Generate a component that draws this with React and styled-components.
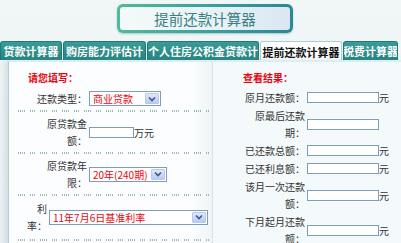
import styled, { createGlobalStyle } from "styled-components";

const GlobalStyle = createGlobalStyle`
  html, body {
    margin: 0;
    padding: 0;
  }
  body {
    background: #eef4f6;
    font-family: "Noto Sans CJK SC", "Liberation Sans", sans-serif;
    font-size: 10px;
    color: #333;
  }
`;

const TABS = ["贷款计算器", "购房能力评估计", "个人住房公积金贷款计", "提前还款计算器", "税费计算器"];
const TAB_WIDTHS = [62, 83, 112, 82, 55];

const RESULTS = ["原月还款额：", "原最后还款期：", "已还款总额：", "已还利息额：", "该月一次还款额：", "下月起月还款额："];

const Chevron = () => (
  <svg width="8" height="6" viewBox="0 0 8 6">
    <path d="M1 1.5 L4 4.5 L7 1.5" fill="none" stroke="#3f5587" strokeWidth="1.6" />
  </svg>
);

const Select = ({ width, value }) => (
  <SelectBox $width={width}>
    <NativeSelect defaultValue={value}>
      <option>{value}</option>
    </NativeSelect>
    <Arrow>
      <Chevron />
    </Arrow>
  </SelectBox>
);

const App = () => {
  return (
    <>
      <GlobalStyle />
      <Page>
        <Header>
          <TitleFrame>
            <TitleInner>提前还款计算器</TitleInner>
          </TitleFrame>
        </Header>

        <TabBar>
          {TABS.map((t, i) => (
            <Tab key={t} $width={TAB_WIDTHS[i]} $active={i === 3}>
              {t}
            </Tab>
          ))}
        </TabBar>

        <Content>
          {/* 左边：填写 */}
          <LeftPanel>
            <Heading>请您填写：</Heading>
            <FormRow>
              <Label>还款类型：</Label>
              <Select width={72} value="商业贷款" />
            </FormRow>
            <Dots />
            <FormRow>
              <Label>原贷款金额：</Label>
              <TextInput $width={45} />
              <Unit>万元</Unit>
            </FormRow>
            <Dots />
            <FormRow>
              <Label>原贷款年限：</Label>
              <Select width={78} value="20年(240期)" />
            </FormRow>
            <Dots />
            <FormRow $tall>
              <Label $width={22} $left={16}>利率：</Label>
              <Select width={159} value="11年7月6日基准利率" />
            </FormRow>
            <Dots />
          </LeftPanel>

          {/* 右边：结果 */}
          <RightPanel>
            <Heading $right>查看结果：</Heading>
            <ResultList>
              {RESULTS.map((r, i) => (
                <ResultRow key={r}>
                  <ResultLabel>{r}</ResultLabel>
                  <TextInput $width={72} />
                  {i !== 1 && <Unit>元</Unit>}
                </ResultRow>
              ))}
            </ResultList>
          </RightPanel>
        </Content>
      </Page>
    </>
  );
};
export default App;

const Page = styled.div`
  width: 401px;
  height: 243px;
  overflow: hidden;
  display: flex;
  flex-direction: column;
  background: linear-gradient(180deg, #f1f6f7 0%, #e9f1f4 100%);
`;

// 标题
const Header = styled.div`
  padding: 4px 0 0 117px;
`;
const TitleFrame = styled.div`
  width: 176px;
  height: 29px;
  box-sizing: border-box;
  padding: 3px;
  border-radius: 6px;
  background: linear-gradient(90deg, #52b99b 0%, #3aa39a 50%, #2a8795 100%);
  box-shadow: 0 1px 2px rgba(60, 110, 120, 0.35);
`;
const TitleInner = styled.div`
  height: 100%;
  border-radius: 3px;
  background: linear-gradient(90deg, #f4faf9 0%, #e9f2f6 55%, #d9e7f2 100%);
  display: flex;
  align-items: center;
  justify-content: center;
  color: #3b7e84;
  font-size: 14.5px;
  letter-spacing: 0;
`;

// 标签页
const TabBar = styled.div`
  display: flex;
  align-items: flex-end;
  gap: 1px;
  margin-top: 8px;
  height: 19px;
`;
const Tab = styled.div`
  width: ${(p) => p.$width}px;
  height: ${(p) => (p.$active ? 20 : 19)}px;
  box-sizing: border-box;
  border-radius: 3px 3px 0 0;
  overflow: hidden;
  white-space: nowrap;
  display: flex;
  align-items: center;
  justify-content: center;
  font-size: 11px;
  font-weight: bold;
  color: ${(p) => (p.$active ? "#111" : "#fff")};
  background: ${(p) =>
    p.$active ? "#fff" : "linear-gradient(180deg, #3a9c98 0%, #23837f 100%)"};
  border: 1px solid ${(p) => (p.$active ? "#a9cfd0" : "#1f7a77")};
  border-bottom: none;
  margin-bottom: ${(p) => (p.$active ? "-1px" : "0")};
`;

// 内容
const Content = styled.div`
  flex: 1;
  display: flex;
  margin-left: 8px;
  border-left: 1px solid #b7cbd4;
  border-top: 2px solid #d9f0f3;
  box-shadow: -3px 0 6px rgba(120, 150, 165, 0.25);
`;
const LeftPanel = styled.div`
  width: 203px;
  padding-top: 7px;
  background: linear-gradient(90deg, #fbfdfe 0%, #fbfdfe 90%, #eef4f7 100%);
  border-right: 1px solid #d6e5ec;
  display: flex;
  flex-direction: column;
`;
const RightPanel = styled.div`
  flex: 1;
  padding-top: 7px;
  background: #f4f9fb;
`;
const Heading = styled.div`
  color: #e8050f;
  font-weight: bold;
  font-size: 10px;
  line-height: 17px;
  padding-left: ${(p) => (p.$right ? 30 : 19)}px;
  margin-bottom: ${(p) => (p.$right ? 3 : 1)}px;
`;

const FormRow = styled.div`
  display: flex;
  align-items: center;
  padding: ${(p) => (p.$tall ? "4px 0 5px" : "3px 0")};
  line-height: 17px;
`;
const Label = styled.div`
  width: ${(p) => p.$width || 54}px;
  margin-left: ${(p) => p.$left || 24}px;
  margin-right: 2px;
  text-align: right;
  color: #333;
`;
const Dots = styled.div`
  height: 2px;
  margin: 0 3px 0 9px;
  background-image: repeating-linear-gradient(90deg, transparent 0 7px, #fbfdfe 7px 11px),
    repeating-linear-gradient(90deg, #9cbcb3 0 1px, transparent 1px 2px);
`;

const SelectBox = styled.div`
  width: ${(p) => p.$width}px;
  height: 15px;
  box-sizing: border-box;
  border: 1px solid #7f9db9;
  background: #fff;
  display: flex;
  align-items: stretch;
`;
const NativeSelect = styled.select`
  appearance: none;
  flex: 1;
  min-width: 0;
  border: none;
  outline: none;
  background: transparent;
  color: #e8050f;
  font-family: inherit;
  font-size: 10px;
  padding: 0 0 0 3px;
  margin: 0;
  line-height: 13px;
`;
const Arrow = styled.span`
  width: 12px;
  margin: 1px;
  border: 1px solid #b7c9ee;
  border-radius: 1px;
  background: linear-gradient(180deg, #dde8fc 0%, #b8ccf3 100%);
  display: flex;
  align-items: center;
  justify-content: center;
`;
const TextInput = styled.input`
  width: ${(p) => p.$width}px;
  height: 11px;
  box-sizing: border-box;
  border: 1px solid #7f9db9;
  background: #fff;
  padding: 0;
  margin: 0;
`;
const Unit = styled.span`
  color: #333;
  font-size: 10px;
`;

const ResultList = styled.div`
  display: flex;
  flex-direction: column;
  gap: 1px;
`;
const ResultRow = styled.div`
  display: flex;
  align-items: center;
  line-height: 17px;
`;
const ResultLabel = styled.div`
  width: 64px;
  margin-left: 28px;
  margin-right: 2px;
  text-align: right;
  color: #333;
`;
